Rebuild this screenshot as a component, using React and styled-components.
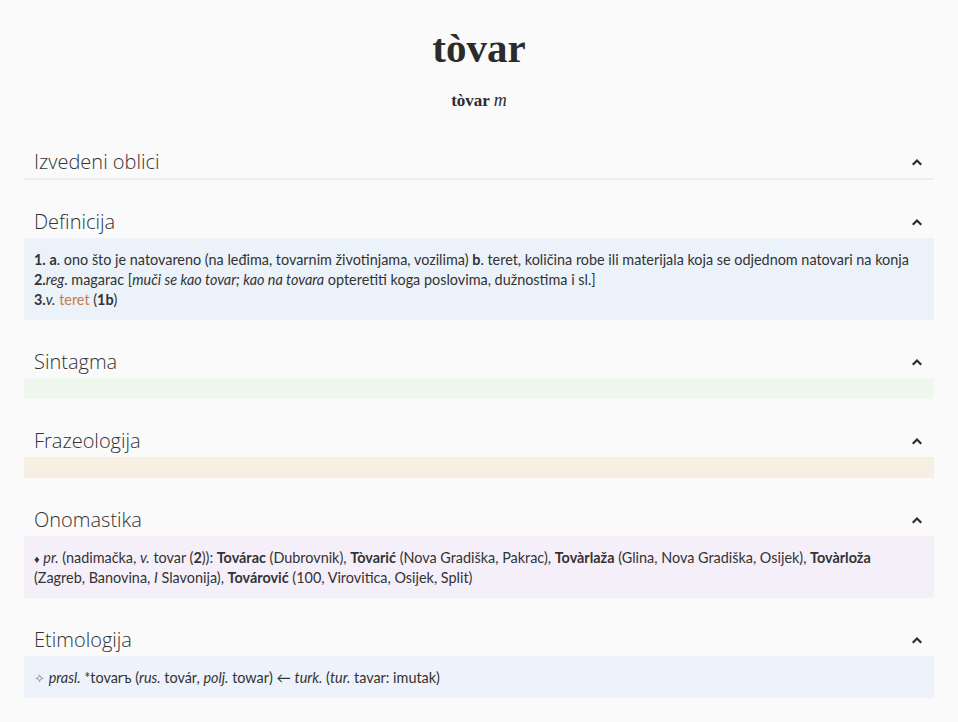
import React from 'react'
import styled, { createGlobalStyle } from 'styled-components';

const GlobalStyle = createGlobalStyle`
    html, body {
        margin: 0;
        padding: 0;
        background: #fafafa;
        color: #333;
        font-family: Lato, "Open Sans", sans-serif;
    }
`;

function Chevron() {
    return (
        <svg width="10" height="8" viewBox="0 0 10 8">
            <path d="M1.5 6 L5 2.5 L8.5 6" fill="none" stroke="#2b2b2b" strokeWidth="2.2" strokeLinecap="square" />
        </svg>
    );
}

function Section({ title, tone, thin, children }) {
    return (
        <SectionWrap>
            <SectionHead>
                <span>{title}</span>
                <Chevron />
            </SectionHead>
            <Panel tone={tone} thin={thin} empty={!children}>{children}</Panel>
        </SectionWrap>
    );
}

function App() {
    return (
        <Page>
            <GlobalStyle />
            <Title>tòvar</Title>
            <Subtitle>tòvar <i>m</i></Subtitle>

            <Section title="Izvedeni oblici" thin />

            <Section title="Definicija" tone="#ecf2f9">
                <Line><b>1.</b> <b>a</b>. ono što je natovareno (na leđima, tovarnim životinjama, vozilima) <b>b</b>. teret, količina robe ili materijala koja se odjednom natovari na konja</Line>
                <Line><b>2.</b><i>reg</i>. magarac [<i>muči se kao tovar; kao na tovara</i> opteretiti koga poslovima, dužnostima i sl.]</Line>
                <Line><b>3.</b><i>v.</i> <Ref>teret</Ref> (<b>1b</b>)</Line>
            </Section>

            <Section title="Sintagma" tone="#eff8ee" />

            <Section title="Frazeologija" tone="#f7efe3" />

            <Section title="Onomastika" tone="#f5effa">
                <Line>
                    <Mark>♦</Mark> <i>pr.</i> (nadimačka, <i>v.</i> tovar (<b>2</b>)): <b>Továrac</b> (Dubrovnik), <b>Tòvarić</b> (Nova Gradiška, Pakrac), <b>Tovàrlaža</b> (Glina, Nova Gradiška, Osijek), <b>Tovàrloža</b> (Zagreb, Banovina, <i>I</i> Slavonija), <b>Továrović</b> (100, Virovitica, Osijek, Split)
                </Line>
            </Section>

            <Section title="Etimologija" tone="#eef2fa">
                <Line>
                    <Mark light>✧</Mark> <i>prasl.</i> *tovarъ (<i>rus.</i> továr, <i>polj.</i> towar) ← <i>turk.</i> (<i>tur.</i> tavar: imutak)
                </Line>
            </Section>
        </Page>
    );
}

export default App


const Page = styled.div`
    max-width: 910px;
    margin: 0 auto;
    padding: 22px 0 40px;
`;

const Title = styled.h1`
    margin: 0;
    text-align: center;
    font-family: "Liberation Serif", serif;
    font-weight: bold;
    font-size: 41px;
    line-height: 52px;
    color: #2b2b2b;
`;

const Subtitle = styled.div`
    margin-top: 15px;
    text-align: center;
    font-family: "Liberation Serif", serif;
    font-weight: bold;
    font-size: 17px;
    line-height: 22px;
    color: #2b2b2b;

    i {
        font-weight: normal;
        font-size: 18px;
    }
`;

const SectionWrap = styled.section`
    margin-top: 22px;

    &:first-of-type {
        margin-top: 30px;
    }
`;

const SectionHead = styled.div`
    display: flex;
    align-items: center;
    justify-content: space-between;
    box-sizing: border-box;
    height: 36px;
    padding: 3px 12px 0 10px;
    font-family: "Open Sans", sans-serif;
    font-size: 20px;
    line-height: 33px;
    font-weight: 300;
    color: #333;
`;

const Panel = styled.div`
    background: ${props => props.tone || '#eeeeee'};
    padding: ${props => props.thin ? '0' : props.empty ? '11px 10px 10px' : '12px 10px 10px'};
    height: ${props => props.thin ? '2px' : 'auto'};
    font-size: 14.4px;
    line-height: 20px;
    color: #333;

    b {
        font-weight: 700;
    }
`;

const Line = styled.div``;

const Ref = styled.span`
    color: #c27d4e;
`;

const Mark = styled.span`
    font-size: ${props => props.light ? '13px' : '11px'};
    line-height: 1;
    color: ${props => props.light ? '#888' : '#333'};
`;
